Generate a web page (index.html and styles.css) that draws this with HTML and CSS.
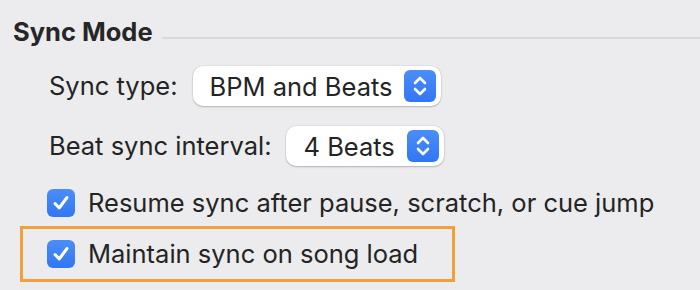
FILE: index.html
```html
<!DOCTYPE html>
<html lang="en">
<head>
    <meta charset="UTF-8">
    <title>Sync Mode</title>
    <link rel="stylesheet" href="styles.css">
</head>
<body>

<div class="section">
    <div class="section-title">
        <h2>Sync Mode</h2>
        <span class="rule"></span>
    </div>

    <div class="row popup-row">
        <label>Sync type:</label>
        <div class="popup popup-type">
            <span class="value">BPM and Beats</span>
            <span class="stepper">
                <svg width="16" height="24" viewBox="0 0 16 24"><path d="M3 9 L8 4 L13 9 M3 15 L8 20 L13 15" fill="none" stroke="#fff" stroke-width="2.6" stroke-linecap="round" stroke-linejoin="round"/></svg>
            </span>
        </div>
    </div>

    <div class="row popup-row">
        <label>Beat sync interval:</label>
        <div class="popup popup-interval">
            <span class="value">4 Beats</span>
            <span class="stepper">
                <svg width="16" height="24" viewBox="0 0 16 24"><path d="M3 9 L8 4 L13 9 M3 15 L8 20 L13 15" fill="none" stroke="#fff" stroke-width="2.6" stroke-linecap="round" stroke-linejoin="round"/></svg>
            </span>
        </div>
    </div>

    <div class="row check-row">
        <span class="checkbox">
            <svg width="20" height="20" viewBox="0 0 20 20"><path d="M4 10.5 L8.2 15 L16 4.5" fill="none" stroke="#fff" stroke-width="3" stroke-linecap="round" stroke-linejoin="round"/></svg>
        </span>
        <span class="check-label">Resume sync after pause, scratch, or cue jump</span>
    </div>

    <div class="highlight">
        <div class="row check-row">
            <span class="checkbox">
                <svg width="20" height="20" viewBox="0 0 20 20"><path d="M4 10.5 L8.2 15 L16 4.5" fill="none" stroke="#fff" stroke-width="3" stroke-linecap="round" stroke-linejoin="round"/></svg>
            </span>
            <span class="check-label">Maintain sync on song load</span>
        </div>
    </div>
</div>

</body>
</html>
```

FILE: styles.css
```css
body {
    margin: 0;
    background: #ececee;
    font-family: Inter, "Noto Sans", sans-serif;
    color: #242424;
    width: 700px;
    height: 290px;
    overflow: hidden;
}

.section {
    padding: 17px 0 0 13px;
}

.section-title {
    display: flex;
    align-items: center;
}

.section-title h2 {
    margin: 0;
    font-size: 25.5px;
    font-weight: 700;
    line-height: 30px;
    color: #262626;
}

.rule {
    flex: 1;
    height: 2px;
    background: #d9d9db;
    margin: 12px 0 0 9px;
}

.row {
    display: flex;
    align-items: center;
    padding-left: 36px;
}

.row label,
.check-label {
    font-size: 25.5px;
    line-height: 30px;
}

.popup-row {
    height: 40px;
}

.popup-row:nth-of-type(2) {
    margin-top: 19px;
}

.popup-row:nth-of-type(3) {
    margin-top: 20px;
}

.popup {
    display: flex;
    align-items: center;
    height: 40px;
    background: #fff;
    border-radius: 10px;
    box-shadow: 0 0 0 0.5px rgba(0, 0, 0, 0.08), 0 1px 2px rgba(0, 0, 0, 0.22);
    margin-left: 15px;
    padding: 0 5px 0 17px;
    box-sizing: border-box;
}

.popup .value {
    font-size: 25.5px;
    flex: 1;
}

.popup-type {
    width: 248px;
}

.popup-interval {
    width: 158px;
}

.stepper {
    width: 32px;
    height: 32px;
    border-radius: 6px;
    background: linear-gradient(#4b8ef8, #3176f5);
    display: flex;
    align-items: center;
    justify-content: center;
}

.check-row {
    height: 30px;
    margin-top: 22px;
}

.checkbox {
    width: 28px;
    height: 28px;
    border-radius: 6px;
    background: linear-gradient(#4b8ef8, #3176f5);
    display: flex;
    align-items: center;
    justify-content: center;
    margin: 0 13px 0 -2px;
    flex-shrink: 0;
}

.highlight {
    margin: 8px 0 0 7px;
    width: 429px;
    height: 50px;
    border: 3px solid #f2a13a;
    display: flex;
    align-items: center;
}

.highlight .check-row {
    margin-top: 0;
    padding-left: 26px;
}
```
